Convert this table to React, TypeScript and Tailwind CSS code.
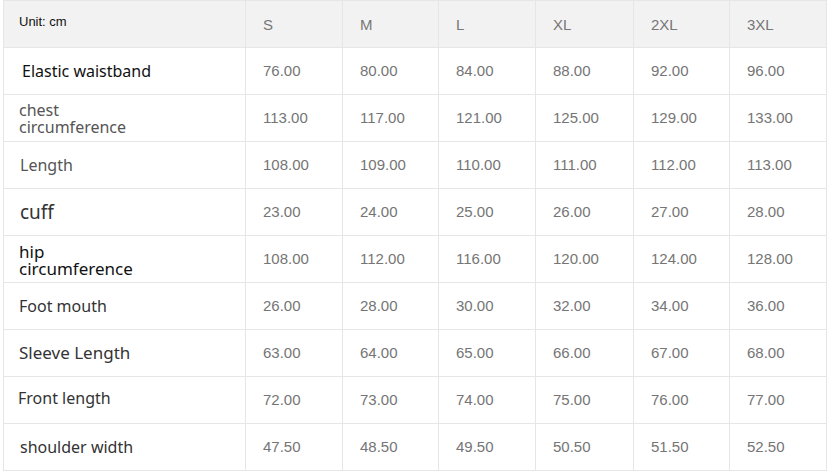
import React from "react";

const sizes = ["S", "M", "L", "XL", "2XL", "3XL"];

type Row = {
  label: React.ReactNode;
  values: string[];
};

const rows: Row[] = [
  {
    label: <span className="pl-[18px] text-[16px] text-[#111]">Elastic waistband</span>,
    values: ["76.00", "80.00", "84.00", "88.00", "92.00", "96.00"],
  },
  {
    label: (
      <span className="pl-[15px] text-[16px] leading-[17px] text-[#555] pt-[2px]">
        chest
        <br />
        circumference
      </span>
    ),
    values: ["113.00", "117.00", "121.00", "125.00", "129.00", "133.00"],
  },
  {
    label: <span className="pl-[16px] text-[16px] text-[#555]">Length</span>,
    values: ["108.00", "109.00", "110.00", "111.00", "112.00", "113.00"],
  },
  {
    label: <span className="pl-[16px] text-[19px] text-[#333]">cuff</span>,
    values: ["23.00", "24.00", "25.00", "26.00", "27.00", "28.00"],
  },
  {
    label: (
      <span className="pl-[15px] text-[17px] leading-[17px] text-[#111] pt-[2px]">
        hip
        <br />
        circumference
      </span>
    ),
    values: ["108.00", "112.00", "116.00", "120.00", "124.00", "128.00"],
  },
  {
    label: <span className="pl-[15px] text-[16px] text-[#333]">Foot mouth</span>,
    values: ["26.00", "28.00", "30.00", "32.00", "34.00", "36.00"],
  },
  {
    label: <span className="pl-[15px] text-[17px] text-[#333]">Sleeve Length</span>,
    values: ["63.00", "64.00", "65.00", "66.00", "67.00", "68.00"],
  },
  {
    label: <span className="pl-[14px] text-[16px] text-[#333] pb-[5px]">Front length</span>,
    values: ["72.00", "73.00", "74.00", "75.00", "76.00", "77.00"],
  },
  {
    label: <span className="pl-[16px] text-[16px] text-[#333]">shoulder width</span>,
    values: ["47.50", "48.50", "49.50", "50.50", "51.50", "52.50"],
  },
];

export default function App() {
  return (
    <div className="w-[832px] h-[473px] bg-white">
      <div className="ml-[3px] w-[824px] grid grid-cols-[241px_96px_95px_96px_97px_95px_96px] auto-rows-[46px] gap-px p-px bg-[#e6e6e6]">
        <div className="bg-[#f2f2f2] flex items-center pl-[15px] pb-[4px] text-[13px] text-[#111] font-['Liberation_Sans',sans-serif]">
          Unit: cm
        </div>
        {sizes.map((s) => (
          <div
            key={s}
            className="bg-[#f2f2f2] flex items-center pl-[17px] pt-[2px] text-[15px] text-[#777] font-['Liberation_Sans',sans-serif]"
          >
            {s}
          </div>
        ))}
        {rows.map((r, i) => (
          <React.Fragment key={i}>
            <div className="bg-white flex items-center font-['Noto_Sans',sans-serif]">
              {r.label}
            </div>
            {r.values.map((v, j) => (
              <div
                key={j}
                className="bg-white flex items-center pl-[17px] text-[15px] text-[#757575] font-['Liberation_Sans',sans-serif]"
              >
                {v}
              </div>
            ))}
          </React.Fragment>
        ))}
      </div>
    </div>
  );
}
